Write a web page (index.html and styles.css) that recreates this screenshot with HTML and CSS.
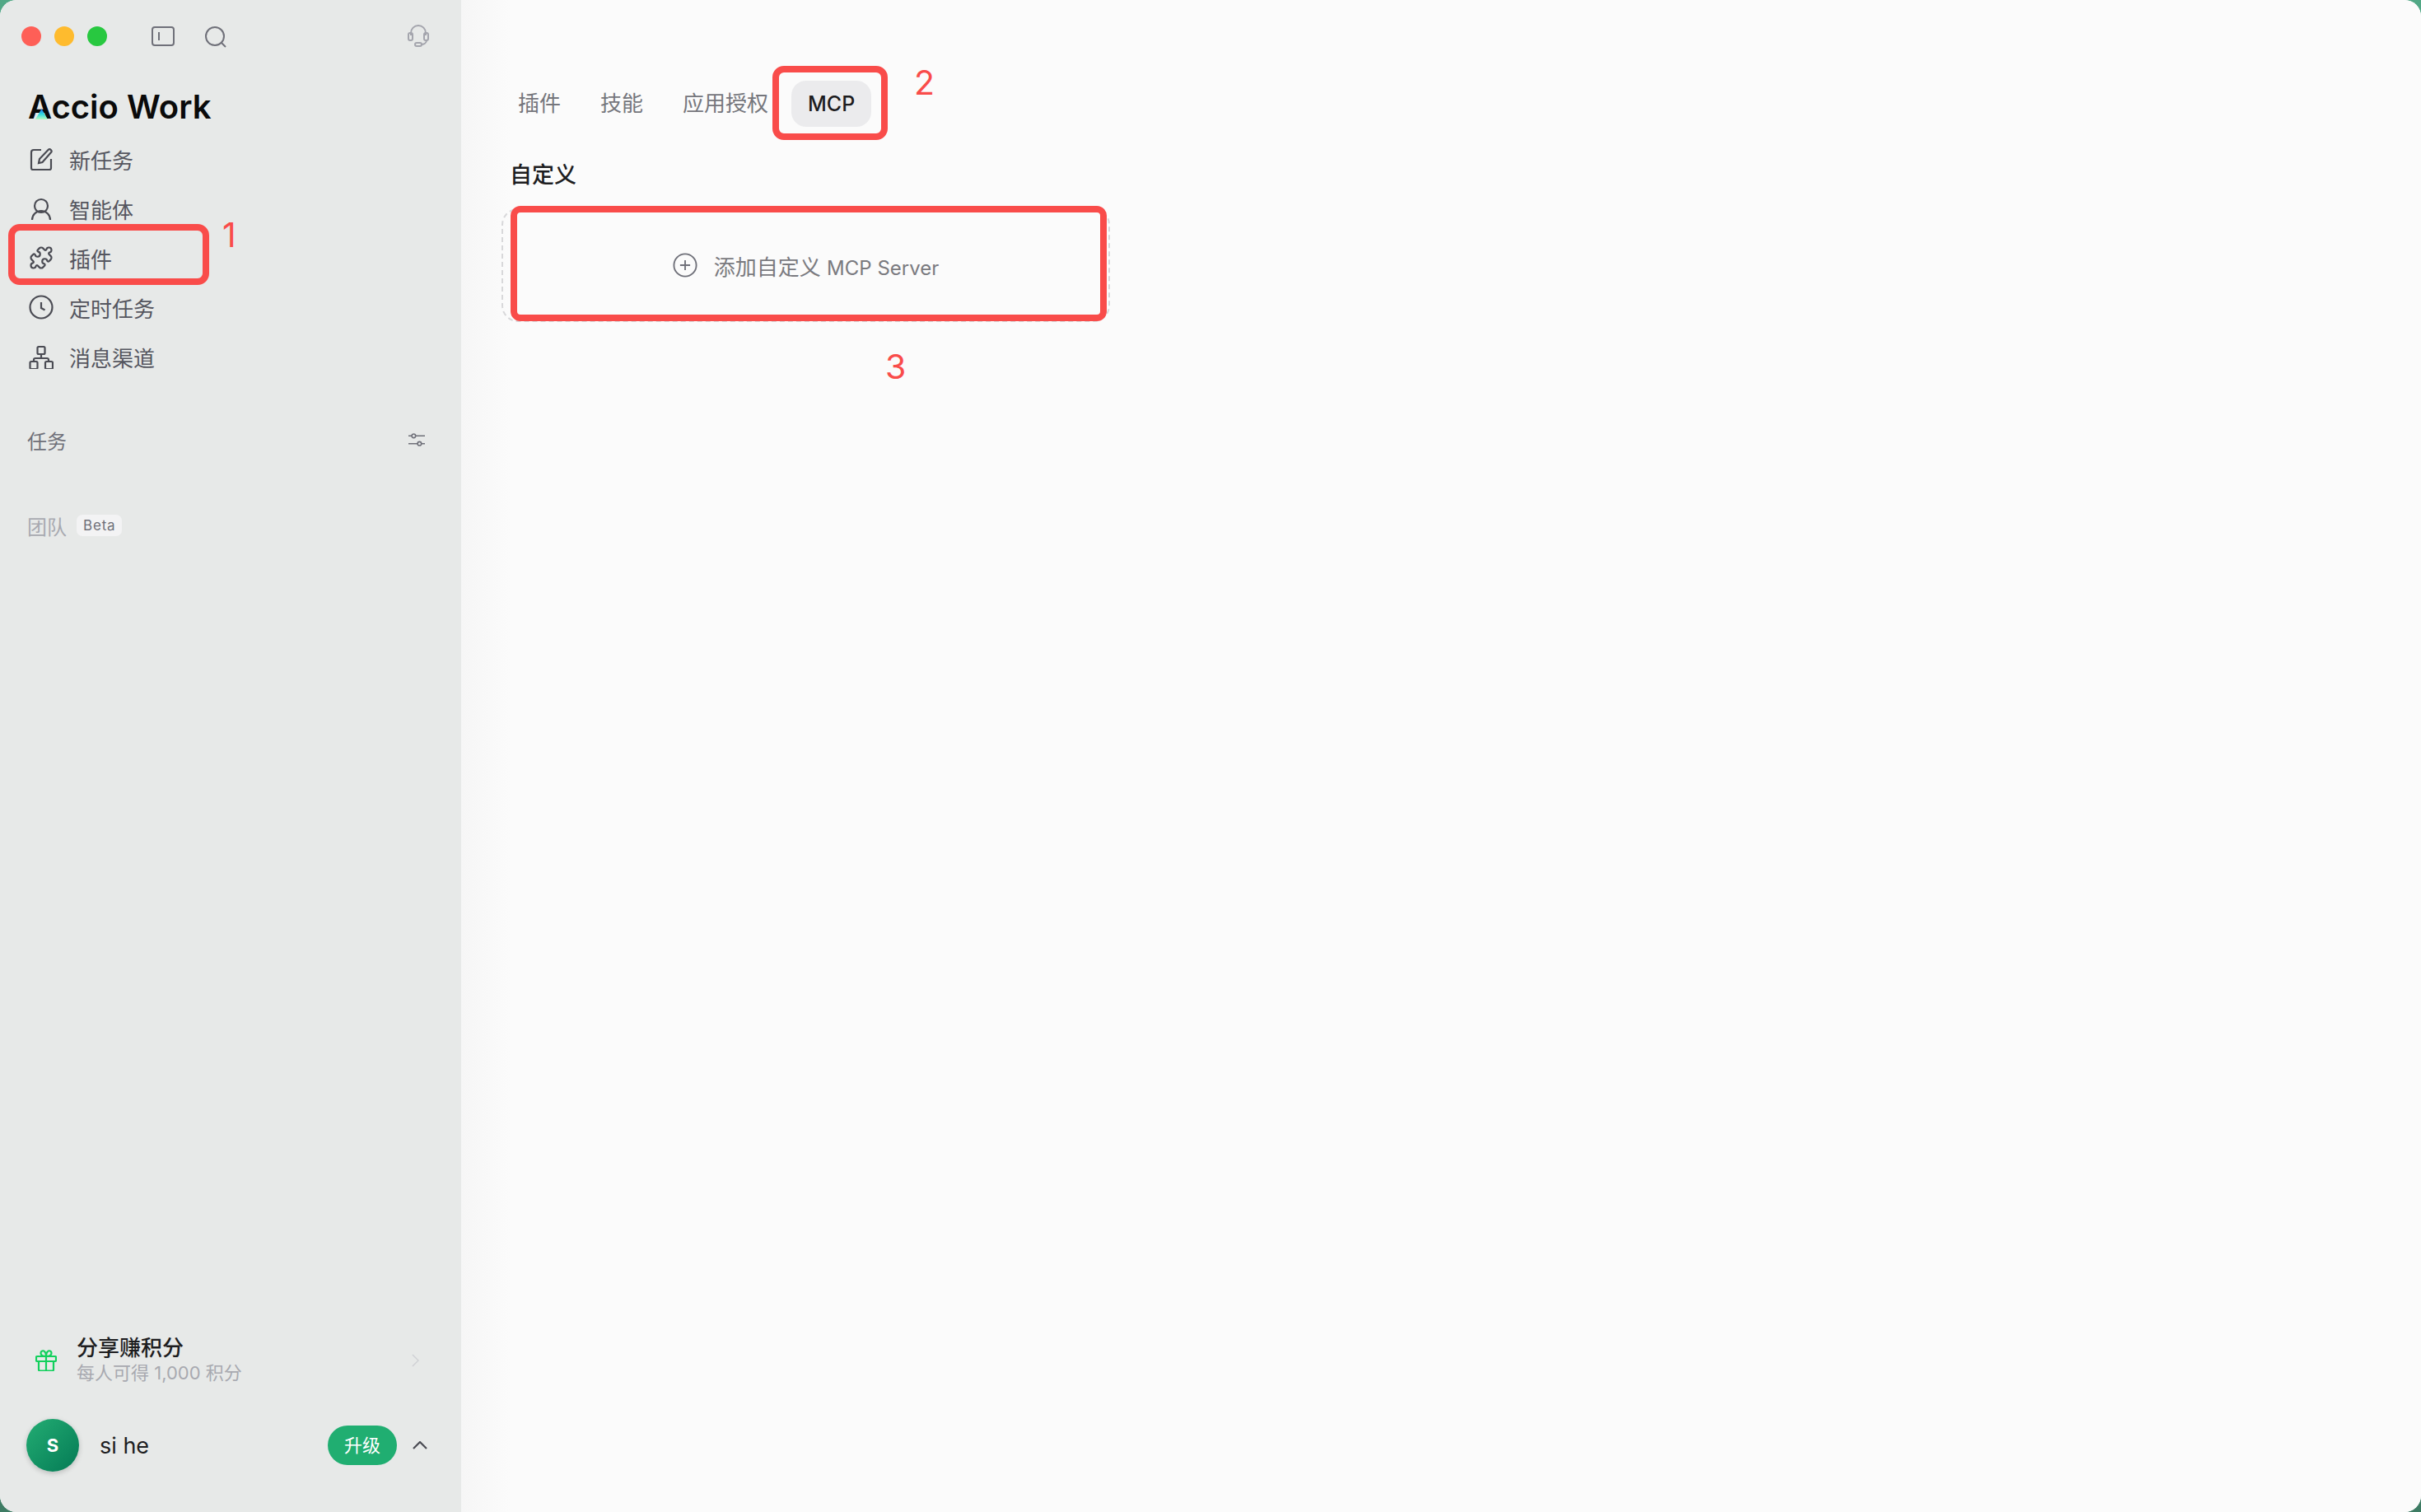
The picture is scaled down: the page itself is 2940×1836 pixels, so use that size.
FILE: index.html
```html
<!DOCTYPE html>
<html lang="zh-CN">
<head>
  <meta charset="UTF-8">
  <title>Accio Work</title>
  <link rel="stylesheet" href="styles.css">
</head>
<body>
  <div class="window">
    <aside class="sidebar">
      <div class="titlebar">
        <span class="light red"></span>
        <span class="light yellow"></span>
        <span class="light green"></span>
        <svg class="tb-icon panel-icon" viewBox="0 0 28 24"><rect x="1" y="1" width="26" height="22" rx="3"/><path d="M9 7v10"/></svg>
        <svg class="tb-icon search-icon" viewBox="0 0 26 26"><circle cx="12" cy="12" r="11"/><path d="M20 20l5 5"/></svg>
        <svg class="tb-icon help-icon" viewBox="0 0 26 28"><path d="M4 13v-3a9 9 0 0 1 18 0v3"/><rect x="1" y="10" width="5" height="9" rx="2"/><rect x="20" y="10" width="5" height="9" rx="2"/><path d="M23 19c0 3-3 5-7 5"/><rect x="9" y="22" width="8" height="4" rx="2"/></svg>
      </div>

      <div class="logo">
        Accio Work
        <svg class="logo-mark" viewBox="0 0 15 13">
          <defs><linearGradient id="logoFill" x1="0" y1="0" x2="0" y2="1"><stop offset="0" stop-color="#1d6ff2"/><stop offset=".5" stop-color="#2fd9e0"/><stop offset="1" stop-color="#b5fbc0"/></linearGradient></defs>
          <path d="M7.5 0L15 13H0z" fill="url(#logoFill)"/>
        </svg>
      </div>

      <nav class="nav">
        <a class="nav-item">
          <svg class="nav-icon" viewBox="0 0 30 30"><path d="M15 4H6a3 3 0 0 0-3 3v19a2 2 0 0 0 2 2h20a2 2 0 0 0 2-2V15"/><path d="M12 20l1-5L23.500 4a2.300 2.300 0 0 1 3.300 3.300L16.500 19z"/></svg>
          <span>新任务</span>
        </a>
        <a class="nav-item">
          <svg class="nav-icon" viewBox="0 0 30 30"><circle cx="15" cy="12" r="8"/><path d="M4 29a11 11 0 0 1 22 0"/></svg>
          <span>智能体</span>
        </a>
        <a class="nav-item">
          <svg class="nav-icon puzzle-icon" viewBox="0 0 24 24"><path d="M15.390 4.390a1 1 0 0 0 1.680-.474 2.500 2.500 0 1 1 3.014 3.015 1 1 0 0 0-.474 1.680l1.683 1.682a2.414 2.414 0 0 1 0 3.414L19.610 15.390a1 1 0 0 1-1.680-.474 2.500 2.500 0 1 0-3.014 3.015 1 1 0 0 1 .474 1.680l-1.683 1.682a2.414 2.414 0 0 1-3.414 0L8.610 19.610a1 1 0 0 0-1.680.474 2.500 2.500 0 1 1-3.014-3.015 1 1 0 0 0 .474-1.680l-1.683-1.682a2.414 2.414 0 0 1 0-3.414L4.390 8.610a1 1 0 0 1 1.680.474 2.500 2.500 0 1 0 3.014-3.015 1 1 0 0 1-.474-1.680l1.683-1.682a2.414 2.414 0 0 1 3.414 0z"/></svg>
          <span>插件</span>
        </a>
        <a class="nav-item">
          <svg class="nav-icon" viewBox="0 0 30 30"><circle cx="15" cy="15" r="13.500"/><path d="M15 9v7l4.500 2.500"/></svg>
          <span>定时任务</span>
        </a>
        <a class="nav-item">
          <svg class="nav-icon" viewBox="0 0 30 30"><rect x="10.500" y="3" width="9" height="9" rx="1.500"/><rect x="1.500" y="21" width="9" height="9" rx="1.500"/><rect x="20" y="21" width="9" height="9" rx="1.500"/><path d="M15 12v5M6 21v-2a2 2 0 0 1 2-2h14a2 2 0 0 1 2 2v2"/></svg>
          <span>消息渠道</span>
        </a>
      </nav>

      <div class="section-head">
        <span>任务</span>
        <svg class="filter-icon" viewBox="0 0 20 16"><path d="M0 3.300h4M9 3.300h11M0 12.700h11M16 12.700h4"/><circle cx="6.400" cy="3.300" r="2.300"/><circle cx="13.400" cy="12.700" r="2.300"/></svg>
      </div>

      <div class="team-head">
        <span>团队</span>
        <span class="beta">Beta</span>
      </div>

      <div class="share">
        <svg class="gift-icon" viewBox="0 0 26 26"><rect x="1" y="8" width="24" height="6" rx="1"/><path d="M4 14v10a1.500 1.500 0 0 0 1.500 1.500h15A1.500 1.500 0 0 0 22 24V14M13 8v17.500M13 8C10 8 6.500 7 6.500 4c0-2.500 3-3.500 4.500-2 1.500 1.300 2 4 2 6zm0 0c3 0 6.500-1 6.500-4 0-2.500-3-3.500-4.500-2-1.500 1.300-2 4-2 6z"/></svg>
        <div class="share-text">
          <div class="share-title">分享赚积分</div>
          <div class="share-sub">每人可得 1,000 积分</div>
        </div>
        <svg class="share-arrow" viewBox="0 0 10 18"><path d="M1 1l8 8-8 8"/></svg>
      </div>

      <div class="user">
        <div class="avatar">S</div>
        <div class="user-name">si he</div>
        <div class="upgrade">升级</div>
        <svg class="chev-up" viewBox="0 0 18 10"><path d="M1 9l8-8 8 8"/></svg>
      </div>
    </aside>

    <main class="main">
      <div class="tabs">
        <span class="tab">插件</span>
        <span class="tab">技能</span>
        <span class="tab">应用授权</span>
        <span class="tab active">MCP</span>
      </div>
      <h2 class="heading">自定义</h2>
      <div class="add-card">
        <svg class="plus-icon" viewBox="0 0 32 32"><circle cx="16" cy="16" r="14.500"/><path d="M16 9.500v13M9.500 16h13"/></svg>
        <span>添加自定义 <span class="latin">MCP Server</span></span>
      </div>
    </main>

    <!-- red annotations on top of the screenshot -->
    <div class="mark mark-1"></div>
    <div class="mark-num num-1">1</div>
    <div class="mark mark-2"></div>
    <div class="mark-num num-2">2</div>
    <div class="mark mark-3"></div>
    <div class="mark-num num-3">3</div>
  </div>
</body>
</html>
```

FILE: styles.css
```css
:root {
  --side-bg: #e7e9e8;
  --main-bg: #fbfbfb;
  --text: #55565f;
  --dark: #1d1d1f;
  --red: #f94c4a;
  --cjk: "Inter", "Noto Sans CJK SC", sans-serif;
}
* { margin: 0; padding: 0; box-sizing: border-box; }
html, body { width: 2940px; height: 1836px; overflow: hidden; }
body { background: linear-gradient(#52a886, #3e7c64); font-family: var(--cjk); }

.window { position: relative; display: flex; width: 2940px; height: 1836px; background: var(--main-bg); border-radius: 20px; overflow: hidden; }

/* Sidebar */
.sidebar { display: flex; flex-direction: column; width: 560px; flex: 0 0 560px; background: var(--side-bg); }
.titlebar { display: flex; align-items: center; height: 28px; margin-top: 30px; padding-left: 26px; }
.light { flex: 0 0 24px; height: 24px; border-radius: 50%; margin-right: 16px; }
.light.red { background: #fe5f57; }
.light.yellow { background: #febb2e; }
.light.green { background: #28c840; }
.tb-icon { flex: none; fill: none; stroke: #6f7079; stroke-width: 2; }
.panel-icon { width: 28px; height: 24px; margin-left: 38px; }
.search-icon { width: 26px; height: 26px; margin: 2px 0 0 37px; }
.help-icon { width: 26px; height: 28px; margin: 0 39px 0 auto; stroke: #a4a5ad; }

.logo { position: relative; margin: 50px 0 0 34px; height: 44px; font-family: "Inter", sans-serif; font-size: 40px; line-height: 44px; font-weight: 600; color: #0a0a0a; white-space: nowrap; }
.logo-mark { position: absolute; left: 9px; top: 24px; width: 15px; height: 13px; }

.nav { display: flex; flex-direction: column; gap: 16px; margin-top: 19px; }
.nav-item { display: flex; align-items: center; height: 44px; padding-left: 35px; font-size: 26px; color: var(--text); }
.nav-icon { flex: none; width: 30px; height: 30px; margin-right: 19px; fill: none; stroke: #4a4b53; stroke-width: 2.2; }
.puzzle-icon { stroke-width: 1.75; }

.section-head { display: flex; align-items: center; justify-content: space-between; height: 40px; margin-top: 59px; padding: 0 44px 0 33px; font-size: 24px; color: #6f7079; }
.filter-icon { width: 20px; height: 16px; fill: none; stroke: #6f7079; stroke-width: 1.6; }

.team-head { display: flex; align-items: center; height: 40px; margin-top: 64px; padding-left: 33px; font-size: 24px; color: #a8a9b0; }
.beta { margin-left: 12px; padding: 0 8px; height: 26px; line-height: 26px; border-radius: 7px; background: #f3f3f4; font-size: 17px; letter-spacing: .8px; color: #6f7079; }

.share { display: flex; align-items: center; margin-top: auto; height: 60px; padding-left: 43px; }
.gift-icon { flex: none; width: 26px; height: 26px; margin-right: 24px; fill: none; stroke: #12d05c; stroke-width: 2.2; }
.share-text { flex: 1; }
.share-title { font-size: 26px; line-height: 30px; font-weight: 500; color: var(--dark); }
.share-sub { font-size: 22px; line-height: 30px; color: #a8a9b0; }
.share-arrow { width: 9px; height: 16px; margin-right: 51px; fill: none; stroke: #cfd0d4; stroke-width: 1.6; }

.user { display: flex; align-items: center; height: 64px; margin: 41px 0 49px; padding-left: 32px; }
.avatar { display: flex; align-items: center; justify-content: center; width: 64px; height: 64px; border-radius: 50%; background: linear-gradient(135deg, #23ad73, #047a55); box-shadow: 0 2px 6px rgba(0,0,0,.2); color: #fff; font-size: 22px; font-weight: 700; }
.user-name { flex: 1; margin-left: 25px; font-size: 27px; color: var(--dark); }
.upgrade { width: 84px; height: 48px; line-height: 48px; border-radius: 24px; text-align: center; background: #20ae71; color: #fff; font-size: 22px; }
.chev-up { width: 18px; height: 10px; margin: 0 41px 0 19px; fill: none; stroke: #4a4b53; stroke-width: 2.2; }

/* Main */
.main { flex: 1; padding: 98px 0 0 49px; background: linear-gradient(90deg, #f6f6f6, var(--main-bg) 60px); }
.tabs { display: flex; align-items: center; gap: 8px; height: 56px; }
.tab { height: 56px; line-height: 56px; padding: 0 20px; font-size: 26px; color: #75767c; }
.tab.active { background: #ebebed; border-radius: 18px; font-size: 25px; font-weight: 500; color: var(--dark); }
.heading { margin: 39px 0 0 10px; font-size: 27px; line-height: 40px; font-weight: 500; color: var(--dark); }
.add-card { display: flex; align-items: center; justify-content: center; gap: 20px; width: 739px; height: 138px; margin-top: 20px; border: 2px dashed #d8d8da; border-radius: 20px; font-size: 26px; color: #7a7a7f; }
.latin { font-size: 24px; }
.plus-icon { width: 30px; height: 30px; fill: none; stroke: #6f7079; stroke-width: 2; }

/* Annotations */
.mark { position: absolute; border: 8px solid var(--red); border-radius: 14px; }
.mark-1 { left: 10px; top: 272px; width: 244px; height: 74px; }
.mark-2 { left: 938px; top: 80px; width: 140px; height: 90px; }
.mark-3 { left: 620px; top: 250px; width: 724px; height: 140px; border-radius: 12px; }
.mark-num { position: absolute; font-family: "Inter", sans-serif; font-size: 41px; line-height: 44px; color: var(--red); }
.num-1 { left: 270px; top: 263px; }
.num-2 { left: 1110px; top: 78px; }
.num-3 { left: 1075px; top: 423px; }
```
